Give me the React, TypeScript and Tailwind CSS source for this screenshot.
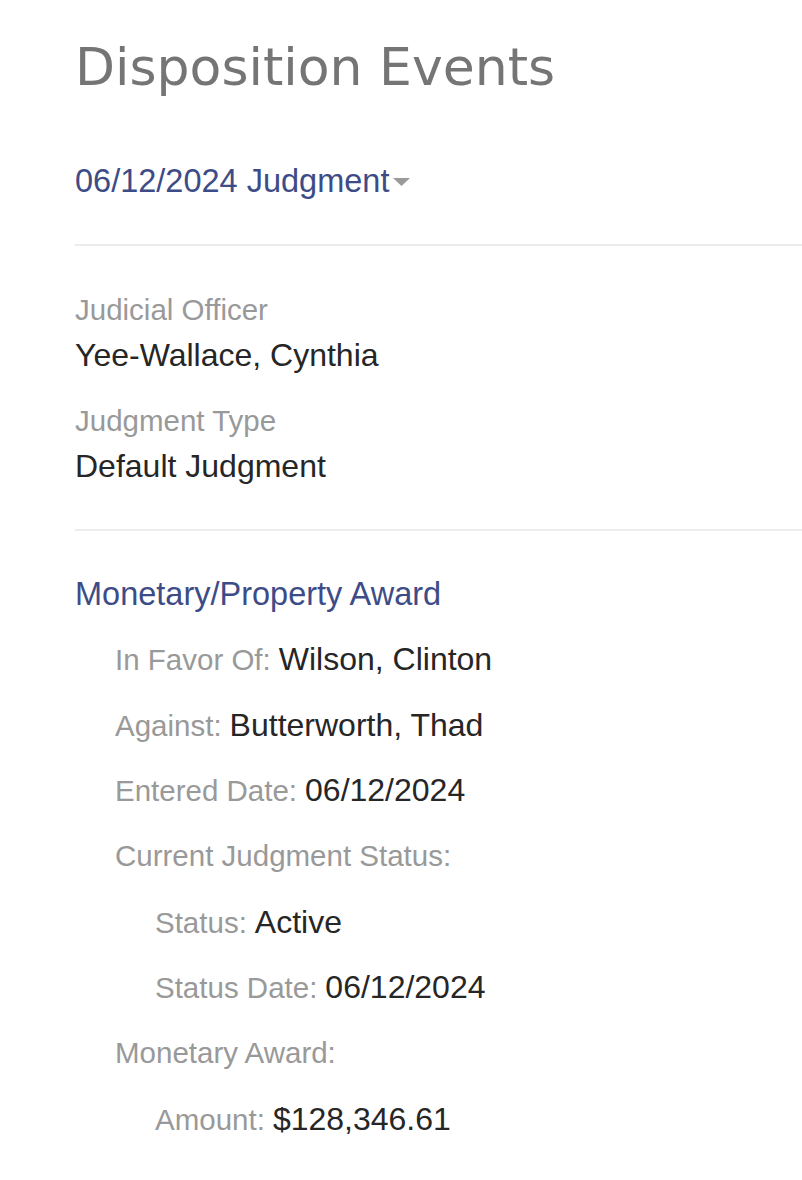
const label = 'text-[29.5px] leading-[40px] text-[#999999]'
const value = 'text-[32px] leading-[40px] text-[#262626]'

function Field({ name, val }: { name: string; val: string }) {
    return (
        <div className="flex flex-col">
            <div className="text-[29.5px] leading-[36px] text-[#999999]">{name}</div>
            <div className="text-[32px] leading-[36px] text-[#262626] mt-[9px]">{val}</div>
        </div>
    )
}

function Row({ name, val, indent = 1 }: { name: string; val?: string; indent?: 1 | 2 }) {
    return (
        <div className={`flex h-[40px] items-baseline gap-[8px] ${indent === 2 ? 'pl-[80px]' : 'pl-[40px]'}`}>
            <span className={label}>{name}</span>
            {val && <span className={value}>{val}</span>}
        </div>
    )
}

export default function App() {
    return (
        <div className="min-h-screen bg-white pl-[75px] pt-[37px] font-['Liberation_Sans',Arial,sans-serif]">
            <h1 className="font-['DejaVu_Sans',Verdana,sans-serif] text-[52px] leading-[60px] text-[#757575]">
                Disposition Events
            </h1>

            {/* Event selector */}
            <div className="mt-[64px] flex items-center text-[32.5px] leading-[40px] text-[#3d4c87]">
                <span>06/12/2024 Judgment</span>
                <svg width="17" height="8" viewBox="0 0 17 8" className="ml-[4px] mt-[2px]">
                    <polygon points="0,0 17,0 8.5,8" fill="#9a9a9a" />
                </svg>
            </div>

            <div className="mt-[43px] h-[2px] bg-[#ececec]"></div>

            <div className="mt-[46px] flex flex-col gap-[30px]">
                <Field name="Judicial Officer" val="Yee-Wallace, Cynthia" />
                <Field name="Judgment Type" val="Default Judgment" />
            </div>

            <div className="mt-[45px] h-[2px] bg-[#ececec]"></div>

            {/* Award */}
            <div className="mt-[43px] text-[32.5px] leading-[40px] text-[#3d4c87]">Monetary/Property Award</div>
            <div className="mt-[25px] flex flex-col gap-[25.7px]">
                <Row name="In Favor Of:" val="Wilson, Clinton" />
                <Row name="Against:" val="Butterworth, Thad" />
                <Row name="Entered Date:" val="06/12/2024" />
                <Row name="Current Judgment Status:" />
                <Row name="Status:" val="Active" indent={2} />
                <Row name="Status Date:" val="06/12/2024" indent={2} />
                <Row name="Monetary Award:" />
                <Row name="Amount:" val="$128,346.61" indent={2} />
            </div>
        </div>
    )
}
